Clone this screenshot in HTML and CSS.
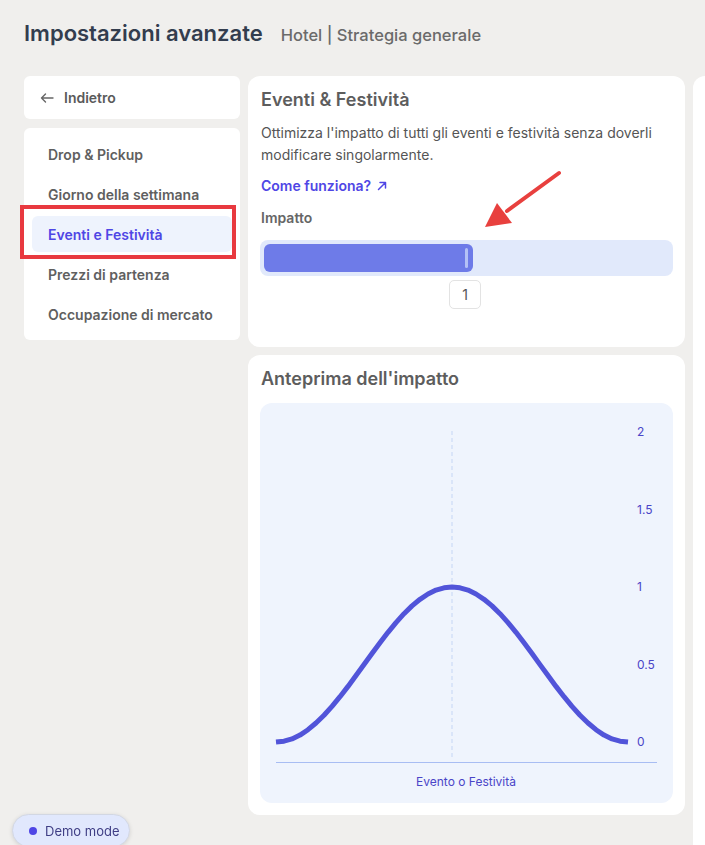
FILE: index.html
```html
<!DOCTYPE html>
<html lang="it">
<head>
<meta charset="utf-8">
<title>Impostazioni avanzate</title>
<link rel="stylesheet" href="styles.css">
</head>
<body>
<header class="page-header">
  <h1 class="page-title">Impostazioni avanzate</h1>
  <span class="page-sub">Hotel | Strategia generale</span>
</header>

<main class="layout">
  <aside class="sidebar">
    <a class="back-card" href="#">
      <svg class="back-icon" width="14" height="10" viewBox="0 0 14 10" aria-hidden="true">
        <path d="M13 5H1.5M5.5 1L1.5 5l4 4" fill="none" stroke="#666" stroke-width="1.4" stroke-linecap="round" stroke-linejoin="round"/>
      </svg>
      <span>Indietro</span>
    </a>
    <nav class="nav-card">
      <a class="nav-item" href="#">Drop &amp; Pickup</a>
      <a class="nav-item" href="#">Giorno della settimana</a>
      <a class="nav-item active" href="#">Eventi e Festività</a>
      <a class="nav-item" href="#">Prezzi di partenza</a>
      <a class="nav-item" href="#">Occupazione di mercato</a>
    </nav>
  </aside>

  <section class="content">
    <div class="card settings-card">
      <h2 class="card-title">Eventi &amp; Festività</h2>
      <p class="card-desc">Ottimizza l'impatto di tutti gli eventi e festività senza doverli modificare singolarmente.</p>
      <a class="how-link" href="#">Come funziona?
        <svg width="10" height="10" viewBox="0 0 10 10" aria-hidden="true">
          <path d="M1.5 8.5L8.5 1.5M3 1.5h5.5V7" fill="none" stroke="#4f46e5" stroke-width="1.5" stroke-linecap="round" stroke-linejoin="round"/>
        </svg>
      </a>
      <div class="field-label">Impatto</div>
      <div class="slider">
        <div class="slider-fill" style="width: 209px"><span class="slider-thumb"></span></div>
      </div>
      <div class="value-row"><span class="value-box">1</span></div>
    </div>

    <div class="card preview-card">
      <h2 class="card-title">Anteprima dell'impatto</h2>
      <div class="chart">
        <svg class="chart-svg" width="413" height="400" viewBox="0 0 413 400">
          <line x1="192" y1="28" x2="192" y2="356" stroke="#d3dff8" stroke-width="1.5" stroke-dasharray="4 3"/>
          <line x1="16" y1="359.5" x2="397" y2="359.5" stroke="#a8bdf3" stroke-width="1"/>
          <path d="M16 339 L24 338.2 L32 335.9 L40 332.1 L48 326.7 L56 320 L64 312.2 L72 303.4 L80 293.7 L88 283.4 L96 272.5 L104 261.6 L112 250.5 L120 239.7 L128 229.3 L136 219.6 L144 210.7 L152 202.9 L160 196.3 L168 191 L176 187.1 L184 184.8 L192 184 L200 184.8 L208 187.1 L216 191 L224 196.3 L232 202.9 L240 210.7 L248 219.6 L256 229.3 L264 239.7 L272 250.5 L280 261.6 L288 272.5 L296 283.4 L304 293.7 L312 303.4 L320 312.2 L328 320 L336 326.7 L344 332.1 L352 335.9 L360 338.2 L368 339" fill="none" stroke="#5154d9" stroke-width="5" stroke-linejoin="round"/>
          <g class="axis-labels">
            <text x="377" y="33">2</text>
            <text x="377" y="111">1.5</text>
            <text x="377" y="188">1</text>
            <text x="377" y="266">0.5</text>
            <text x="377" y="343">0</text>
            <text x="206" y="383" text-anchor="middle">Evento o Festività</text>
          </g>
        </svg>
      </div>
    </div>
  </section>

  <div class="card side-card"></div>
</main>

<div class="highlight-box" aria-hidden="true"></div>
<svg class="annot-arrow" width="90" height="70" viewBox="0 0 90 70" aria-hidden="true">
  <line x1="82" y1="8" x2="30" y2="46" stroke="#e8403e" stroke-width="4" stroke-linecap="round"/>
  <polygon points="8,62 20,38 35,58" fill="#e8403e"/>
</svg>

<div class="demo-pill"><span class="demo-dot"></span>Demo mode</div>
</body>
</html>
```

FILE: styles.css
```css
html, body {
  margin: 0;
  padding: 0;
  overflow: hidden;
  height: 100%;
}
body {
  background: #f0efed;
  font-family: Inter, "Noto Sans", "Liberation Sans", sans-serif;
  color: #555;
  position: relative;
}
a { text-decoration: none; }

.page-header {
  display: flex;
  align-items: baseline;
  gap: 18px;
  padding: 20px 24px 0;
  height: 59px;
  box-sizing: border-box;
}
.page-title {
  margin: 0;
  font-size: 22px;
  font-weight: 600;
  color: #333d4e;
}
.page-sub {
  font-size: 16.5px;
  font-weight: 500;
  color: #6a6a6a;
}

.layout {
  display: grid;
  grid-template-columns: 216px 437px 1fr;
  gap: 8px;
  padding: 17px 0 0 24px;
  align-items: start;
  overflow: hidden;
}

.sidebar {
  display: flex;
  flex-direction: column;
  gap: 9px;
}
.back-card {
  display: flex;
  align-items: center;
  gap: 10px;
  height: 43px;
  padding: 0 16px;
  background: #fff;
  border-radius: 6px;
  font-size: 14px;
  font-weight: 600;
  color: #5a5a5a;
  box-sizing: border-box;
}
.back-icon { display: block; }

.nav-card {
  display: flex;
  flex-direction: column;
  gap: 4px;
  padding: 8px;
  background: #fff;
  border-radius: 6px;
}
.nav-item {
  display: flex;
  align-items: center;
  height: 36px;
  padding: 0 16px;
  border-radius: 6px;
  font-size: 14px;
  font-weight: 600;
  color: #5f5f5f;
}
.nav-item.active {
  background: #eef3fd;
  color: #4f46e5;
}

.content {
  display: flex;
  flex-direction: column;
  gap: 8px;
}
.card {
  background: #fff;
  border-radius: 12px;
}
.settings-card {
  padding: 12px 12px 38px;
}
.preview-card {
  padding: 12px;
}
.card-title {
  margin: 0 0 0 1px;
  font-size: 18px;
  line-height: 24px;
  font-weight: 600;
  color: #5d5d5d;
}
.card-desc {
  margin: 10px 0 0 1px;
  font-size: 14px;
  line-height: 22px;
  color: #555;
}
.how-link {
  display: inline-flex;
  align-items: center;
  gap: 6px;
  margin: 9px 0 0 1px;
  font-size: 14px;
  line-height: 22px;
  font-weight: 600;
  color: #4f46e5;
}
.field-label {
  margin: 10px 0 0 1px;
  font-size: 14px;
  line-height: 22px;
  font-weight: 600;
  color: #666;
}
.slider {
  margin-top: 11px;
  height: 36px;
  padding: 4px;
  box-sizing: border-box;
  background: #e1e9fb;
  border-radius: 8px;
}
.slider-fill {
  position: relative;
  height: 28px;
  background: #6e7be8;
  border-radius: 6px;
}
.slider-thumb {
  position: absolute;
  right: 5px;
  top: 4px;
  width: 3px;
  height: 20px;
  border-radius: 2px;
  background: #b4c1f6;
}
.value-row {
  display: flex;
  justify-content: center;
  margin-top: 4px;
}
.value-box {
  display: flex;
  align-items: center;
  justify-content: center;
  width: 32px;
  height: 29px;
  box-sizing: border-box;
  border: 1px solid #e3e3e3;
  border-radius: 5px;
  font-size: 14px;
  color: #555;
  margin-right: 3px;
}

.chart {
  margin-top: 12px;
  height: 400px;
  background: #eff4fd;
  border-radius: 12px;
}
.chart-svg { display: block; }
.axis-labels text {
  font-family: Inter, "Noto Sans", sans-serif;
  font-size: 12px;
  fill: #4a45c8;
}

.side-card {
  height: 800px;
  border-radius: 12px 0 0 12px;
}

.highlight-box {
  position: absolute;
  left: 20px;
  top: 205px;
  width: 216px;
  height: 54px;
  box-sizing: border-box;
  border: 4px solid #e8393f;
}
.annot-arrow {
  position: absolute;
  left: 477px;
  top: 165px;
}

.demo-pill {
  position: fixed;
  left: 12px;
  bottom: -2px;
  display: flex;
  align-items: center;
  gap: 8px;
  height: 33px;
  padding: 0 9px 0 16px;
  box-sizing: border-box;
  background: #e1e8fd;
  border: 1px solid #d2d7e3;
  border-radius: 17px;
  box-shadow: 0 1px 4px rgba(0,0,0,0.12);
  font-size: 13px;
  color: #3f3e85;
}
.demo-dot {
  width: 8px;
  height: 8px;
  border-radius: 50%;
  background: #4f46e5;
}
```
